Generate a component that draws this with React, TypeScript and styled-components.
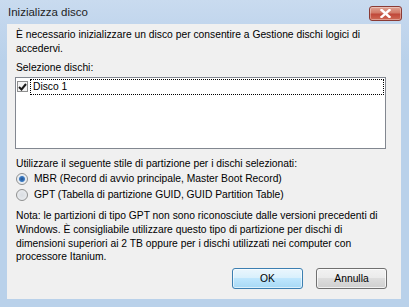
import styled, { createGlobalStyle } from "styled-components";

const GlobalStyle = createGlobalStyle`
  html, body {
    margin: 0;
    padding: 0;
    background: #b9d1ea;
  }
  * {
    box-sizing: border-box;
  }
`;

export default function App() {
  return (
    <>
      <GlobalStyle />
      <Window>
        <TitleBar>
          <Title>Inizializza disco</Title>
          <CloseButton aria-label="Chiudi">
            <svg width="11" height="9" viewBox="0 0 11 9">
              <path
                d="M1.5 1 L9.5 8 M9.5 1 L1.5 8"
                stroke="#fff"
                strokeWidth="2.4"
                strokeLinecap="square"
              />
            </svg>
          </CloseButton>
        </TitleBar>

        <Panel>
          <Text>
            È necessario inizializzare un disco per consentire a Gestione dischi
            logici di
            <br />
            accedervi.
          </Text>

          <Label>Selezione dischi:</Label>
          <ListBox>
            <ListRow>
              <Check>
                <svg width="9" height="8" viewBox="0 0 9 8">
                  <path
                    d="M1 4 L3.5 6.5 L8 1"
                    stroke="#1a1a1a"
                    strokeWidth="2"
                    fill="none"
                  />
                </svg>
              </Check>
              <FocusLabel>Disco 1</FocusLabel>
            </ListRow>
          </ListBox>

          <Label $top={8}>
            Utilizzare il seguente stile di partizione per i dischi selezionati:
          </Label>
          <RadioRow>
            <Radio $checked />
            <span>MBR (Record di avvio principale, Master Boot Record)</span>
          </RadioRow>
          <RadioRow>
            <Radio />
            <span>GPT (Tabella di partizione GUID, GUID Partition Table)</span>
          </RadioRow>

          <Note>
            Nota: le partizioni di tipo GPT non sono riconosciute dalle versioni
            precedenti di
            <br />
            Windows. È consigliabile utilizzare questo tipo di partizione per
            dischi di
            <br />
            dimensioni superiori ai 2 TB oppure per i dischi utilizzati nei
            computer con
            <br />
            processore Itanium.
          </Note>

          <ButtonRow>
            <Button $primary>OK</Button>
            <Button>Annulla</Button>
          </ButtonRow>
        </Panel>
      </Window>
    </>
  );
}

const Window = styled.div`
  width: 409px;
  height: 307px;
  display: flex;
  flex-direction: column;
  padding: 0 8px 8px 7px;
  background: linear-gradient(
    to bottom,
    #c9dbef 0px,
    #c2d6ed 24px,
    #b9d1ea 60px,
    #b9d1ea 100%
  );
  font-family: "Liberation Sans", Arial, sans-serif;
  color: #000;
`;

const TitleBar = styled.div`
  height: 24px;
  display: flex;
  align-items: flex-start;
  justify-content: space-between;
`;

const Title = styled.div`
  padding: 6px 0 0 1px;
  font-size: 11.5px;
  color: #1e1e1e;
`;

const CloseButton = styled.button`
  width: 33px;
  height: 15px;
  margin-top: 6px;
  margin-right: -1px;
  padding: 0;
  display: flex;
  align-items: center;
  justify-content: center;
  border: 1px solid #8a3b35;
  border-radius: 3px;
  background: linear-gradient(
    to bottom,
    #e0a394 0%,
    #d27a68 45%,
    #c0483a 55%,
    #cf6a55 100%
  );
  box-shadow: inset 0 0 0 1px rgba(255, 255, 255, 0.35);
`;

const Panel = styled.div`
  flex: 1;
  display: flex;
  flex-direction: column;
  padding: 4px 15px 0 8px;
  background: #f0f0f0;
  font-size: 10.3px;
  line-height: 14px;
  white-space: nowrap;
`;

const Text = styled.div`
  padding-left: 1px;
`;

const Label = styled.div<{ $top?: number }>`
  margin-top: ${(props) => props.$top ?? 5}px;
  padding-left: 1px;
  height: 14px;
`;

const ListBox = styled.div`
  margin-top: 2px;
  height: 72px;
  border: 1px solid #828790;
  background: #fff;
`;

const ListRow = styled.div`
  height: 17px;
  display: flex;
  align-items: center;
  padding-left: 1px;
`;

const Check = styled.span`
  width: 11px;
  height: 11px;
  display: flex;
  align-items: center;
  justify-content: center;
  border: 1px solid #8e8f8f;
  background: #f4f4f4;
`;

const FocusLabel = styled.span`
  flex: 1;
  height: 16px;
  margin: 0 1px 0 2px;
  padding-left: 2px;
  display: flex;
  align-items: center;
  border: 1px dotted #000;
`;

const RadioRow = styled.div`
  height: 16px;
  display: flex;
  align-items: center;
  gap: 6px;
  padding-left: 1px;
`;

const Radio = styled.span<{ $checked?: boolean }>`
  width: 12px;
  height: 12px;
  border-radius: 50%;
  border: 1px solid #8e8f8f;
  background: ${(props) =>
    props.$checked
      ? "radial-gradient(circle, #1f4f8c 0, #3d7cc4 2.5px, #e3e9ef 3.5px, #fff 100%)"
      : "radial-gradient(circle, #d9dde2 0, #eef0f2 100%)"};
`;

const Note = styled.div`
  margin-top: 6px;
  padding-left: 1px;
  line-height: 13.8px;
`;

const ButtonRow = styled.div`
  margin-top: 4px;
  margin-right: -1px;
  display: flex;
  justify-content: flex-end;
  gap: 13px;
`;

const Button = styled.button<{ $primary?: boolean }>`
  width: 71px;
  height: 21px;
  padding: 0;
  font-family: inherit;
  font-size: 10.3px;
  color: #000;
  border-radius: 3px;
  border: 1px solid ${(props) => (props.$primary ? "#3c7fb1" : "#707070")};
  background: ${(props) =>
    props.$primary
      ? "linear-gradient(to bottom, #eaf6fd 0%, #d9f0fc 45%, #bee6fd 50%, #a7d9f5 100%)"
      : "linear-gradient(to bottom, #f2f2f2 0%, #ebebeb 45%, #dddddd 50%, #cfcfcf 100%)"};
  box-shadow: inset 0 0 0 1px
    ${(props) => (props.$primary ? "rgba(255,255,255,0.6)" : "rgba(255,255,255,0.7)")};
`;
